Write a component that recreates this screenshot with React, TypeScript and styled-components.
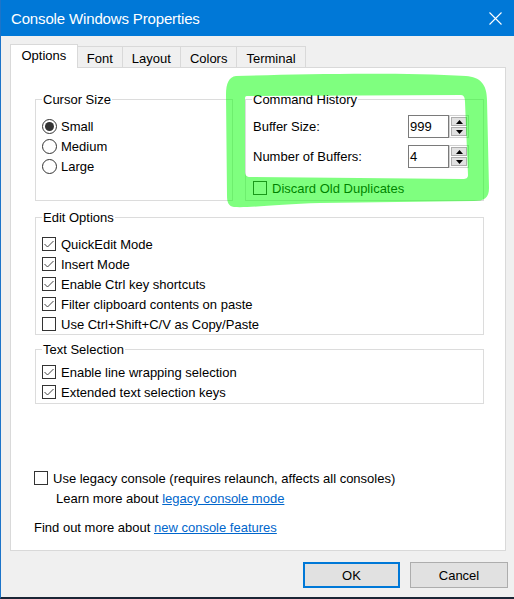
import React from 'react';
import styled, { createGlobalStyle } from 'styled-components';

const Global = createGlobalStyle`
  html, body { margin: 0; padding: 0; background: #f0f0f0; }
  body {
    font-family: "Liberation Sans", Arial, sans-serif;
    font-size: 13px;
    color: #000;
  }
  * { box-sizing: border-box; }
`;

const Window = styled.div`
  position: relative;
  width: 514px;
  height: 599px;
  background: #f0f0f0;
  border-left: 1px solid #1c74c9;
  border-bottom: 2px solid #1b2636;
  display: flex;
  flex-direction: column;
  overflow: hidden;
`;

const TitleBar = styled.div`
  height: 36px;
  flex: none;
  background: #0078d7;
  color: #fff;
  display: flex;
  align-items: center;
  justify-content: space-between;
  padding: 0 12px 0 10px;
`;

const Title = styled.div`
  font-size: 15px;
  letter-spacing: -0.15px;
  line-height: 18px;
  padding-top: 1px;
`;

const CloseIcon = styled.svg`
  width: 13px;
  height: 13px;
  display: block;
`;

const Body = styled.div`
  flex: 1;
  display: flex;
  flex-direction: column;
  padding: 8px 7px 0 9px;
`;

const TabStrip = styled.div`
  display: flex;
  align-items: flex-end;
  height: 24px;
  margin-bottom: -1px;
  position: relative;
  z-index: 1;
`;

const Tab = styled.div<{ $active?: boolean }>`
  height: ${(p) => (p.$active ? '24px' : '22px')};
  padding: ${(p) => (p.$active ? '3px 10.5px 0' : '4px 9px 0')};
  line-height: 15px;
  background: ${(p) => (p.$active ? '#fff' : '#f0f0f0')};
  border: 1px solid #d9d9d9;
  border-bottom: ${(p) => (p.$active ? 'none' : '1px solid #d9d9d9')};
  white-space: nowrap;
  position: relative;
  z-index: ${(p) => (p.$active ? 2 : 1)};
  & + & { margin-left: -1px; }
`;

const Panel = styled.div`
  width: 496px;
  height: 484px;
  background: #fff;
  border: 1px solid #d9d9d9;
  padding: 31px 21px 0 24px;
  display: flex;
  flex-direction: column;
`;

const TopRow = styled.div`
  display: grid;
  grid-template-columns: 198px 1fr;
  column-gap: 12px;
  height: 102px;
`;

const Group = styled.div<{ $pt: number; $pb?: number; $pl?: number; $pr?: number; $mt?: number }>`
  position: relative;
  border: 1px solid #dcdcdc;
  padding: ${(p) => `${p.$pt}px ${p.$pr ?? 6}px ${p.$pb ?? 0}px ${p.$pl ?? 6}px`};
  margin-top: ${(p) => p.$mt ?? 0}px;
  display: flex;
  flex-direction: column;
`;

const GroupLabel = styled.div`
  position: absolute;
  top: -8px;
  left: 6px;
  padding: 0 1px;
  background: #fff;
  line-height: 15px;
  white-space: nowrap;
`;

const Option = styled.label<{ $gap?: number; $mt?: number; $ml?: number }>`
  display: flex;
  align-items: center;
  height: 20px;
  gap: ${(p) => p.$gap ?? 5}px;
  margin-top: ${(p) => p.$mt ?? 0}px;
  margin-left: ${(p) => p.$ml ?? 0}px;
  white-space: nowrap;
`;

const RadioCircle = styled.span<{ $checked?: boolean }>`
  width: 15px;
  height: 15px;
  flex: none;
  border-radius: 50%;
  border: 1px solid #333;
  background: #fff;
  display: flex;
  align-items: center;
  justify-content: center;
  &::after {
    content: '';
    width: 9px;
    height: 9px;
    border-radius: 50%;
    background: ${(p) => (p.$checked ? '#333' : 'transparent')};
  }
`;

const Box = styled.span`
  width: 14px;
  height: 14px;
  flex: none;
  border: 1px solid #333;
  background: #fff;
  display: flex;
  align-items: center;
  justify-content: center;
`;

const Check = () => (
  <svg width="12" height="12" viewBox="0 0 12 12">
    <polyline points="1.5,6 4.5,9 10.5,3" fill="none" stroke="#444" strokeWidth="1" />
  </svg>
);

const CheckOption = ({ label, checked, mt, ml }: { label: string; checked?: boolean; mt?: number; ml?: number }) => (
  <Option $mt={mt} $ml={ml}>
    <Box>{checked && <Check />}</Box>
    <span>{label}</span>
  </Option>
);

const RadioOption = ({ label, checked }: { label: string; checked?: boolean }) => (
  <Option $gap={4}>
    <RadioCircle $checked={checked} />
    <span>{label}</span>
  </Option>
);

const SpinRow = styled.div<{ $mt?: number }>`
  display: flex;
  align-items: center;
  justify-content: space-between;
  height: 23px;
  margin-top: ${(p) => p.$mt ?? 0}px;
`;

const Spin = styled.div`
  display: flex;
  height: 23px;
`;

const SpinInput = styled.div`
  width: 41px;
  height: 23px;
  border: 1px solid #7a7a7a;
  background: #fff;
  padding-left: 1px;
  display: flex;
  align-items: center;
  line-height: 15px;
`;

const SpinCol = styled.div`
  width: 20px;
  height: 23px;
  border: 1px solid #cfcfcf;
  padding: 1px;
  display: flex;
  flex-direction: column;
  gap: 1px;
  background: #fff;
`;

const SpinBtn = styled.div`
  flex: 1;
  background: #e1e1e1;
  border: 1px solid #adadad;
  display: flex;
  align-items: center;
  justify-content: center;
`;

const Arrow = ({ up }: { up?: boolean }) => (
  <svg width="7" height="4" viewBox="0 0 7 4">
    <polygon points={up ? '0,4 3.5,0 7,4' : '0,0 3.5,4 7,0'} fill="#000" />
  </svg>
);

const SpinBox = ({ value }: { value: string }) => (
  <Spin>
    <SpinInput>{value}</SpinInput>
    <SpinCol>
      <SpinBtn><Arrow up /></SpinBtn>
      <SpinBtn><Arrow /></SpinBtn>
    </SpinCol>
  </Spin>
);

const TextLine = styled.div<{ $mt?: number; $ml?: number }>`
  height: 20px;
  line-height: 20px;
  margin-top: ${(p) => p.$mt ?? 0}px;
  margin-left: ${(p) => p.$ml ?? 0}px;
  white-space: nowrap;
`;

const Link = styled.a`
  color: #0066cc;
  text-decoration: underline;
  cursor: pointer;
`;

const ButtonRow = styled.div`
  display: flex;
  justify-content: flex-end;
  gap: 10px;
  margin-top: 11px;
  margin-right: -1px;
`;

const Button = styled.button<{ $primary?: boolean; $w: number }>`
  width: ${(p) => p.$w}px;
  height: 26px;
  background: #e1e1e1;
  border: ${(p) => (p.$primary ? '2px solid #0078d7' : '1px solid #adadad')};
  font-family: "Liberation Sans", Arial, sans-serif;
  font-size: 13px;
  color: #000;
  padding: 0;
`;

const Highlight = styled.svg`
  position: absolute;
  left: -1px;
  top: 0;
  width: 514px;
  height: 599px;
  pointer-events: none;
`;

export default function App() {
  return (
    <>
      <Global />
      <Window>
        <TitleBar>
          <Title>Console Windows Properties</Title>
          <CloseIcon viewBox="0 0 13 13">
            <path d="M0.5 0.5 L12.5 12.5 M12.5 0.5 L0.5 12.5" stroke="#fff" strokeWidth="1.1" />
          </CloseIcon>
        </TitleBar>
        <Body>
          <TabStrip>
            <Tab $active>Options</Tab>
            <Tab>Font</Tab>
            <Tab>Layout</Tab>
            <Tab>Colors</Tab>
            <Tab>Terminal</Tab>
          </TabStrip>
          <Panel>
            <TopRow>
              <Group $pt={16}>
                <GroupLabel>Cursor Size</GroupLabel>
                <RadioOption label="Small" checked />
                <RadioOption label="Medium" />
                <RadioOption label="Large" />
              </Group>
              <Group $pt={15} $pl={7} $pr={14}>
                <GroupLabel>Command History</GroupLabel>
                <SpinRow>
                  <span>Buffer Size:</span>
                  <SpinBox value="999" />
                </SpinRow>
                <SpinRow $mt={7}>
                  <span>Number of Buffers:</span>
                  <SpinBox value="4" />
                </SpinRow>
                <CheckOption label="Discard Old Duplicates" mt={10} />
              </Group>
            </TopRow>
            <Group $pt={16} $mt={16}>
              <GroupLabel>Edit Options</GroupLabel>
              <CheckOption label="QuickEdit Mode" checked />
              <CheckOption label="Insert Mode" checked />
              <CheckOption label="Enable Ctrl key shortcuts" checked />
              <CheckOption label="Filter clipboard contents on paste" checked />
              <CheckOption label="Use Ctrl+Shift+C/V as Copy/Paste" />
            </Group>
            <Group $pt={12} $pb={1} $mt={14}>
              <GroupLabel>Text Selection</GroupLabel>
              <CheckOption label="Enable line wrapping selection" checked />
              <CheckOption label="Extended text selection keys" checked />
            </Group>
            <CheckOption label="Use legacy console (requires relaunch, affects all consoles)" mt={64} ml={-1} />
            <TextLine $mt={1} $ml={21}>
              Learn more about <Link>legacy console mode</Link>
            </TextLine>
            <TextLine $mt={9} $ml={-1}>
              Find out more about <Link>new console features</Link>
            </TextLine>
          </Panel>
          <ButtonRow>
            <Button $primary $w={97}>OK</Button>
            <Button $w={98}>Cancel</Button>
          </ButtonRow>
        </Body>
        <Highlight viewBox="0 0 514 599">
          <path
            fillRule="evenodd"
            fill="rgba(0,255,0,0.5)"
            d="M 236 76 C 300 74, 400 72, 466 76 C 480 77, 487 84, 487 100 L 489 188 C 489 198, 484 201, 474 201 L 320 203 C 280 204, 250 208, 234 207 C 228 206, 227 202, 227 195 L 226 95 C 226 83, 229 77, 236 76 Z
               M 247 96 L 461 95 C 464 95, 465 98, 465 102 L 468 175 C 468 178, 466 179, 463 179 L 250 177 C 247 177, 245 175, 245 172 L 245 100 C 245 97, 245 96, 247 96 Z"
          />
        </Highlight>
      </Window>
    </>
  );
}
